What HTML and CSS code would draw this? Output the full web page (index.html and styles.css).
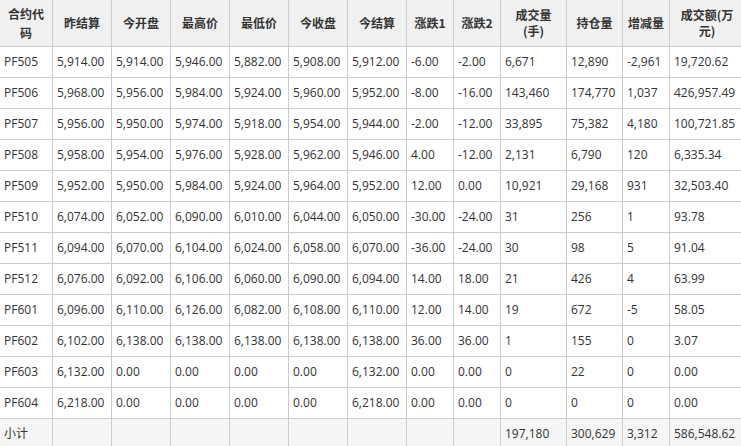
FILE: index.html
```html
<!DOCTYPE html>
<html lang="zh">
<head>
<meta charset="utf-8">
<link rel="stylesheet" href="styles.css">
</head>
<body>
<table class="quote">
<colgroup>
<col class="c-code"><col class="c-px"><col class="c-px"><col class="c-px"><col class="c-px"><col class="c-px"><col class="c-px"><col class="c-chg"><col class="c-chg"><col class="c-vol"><col class="c-oi"><col class="c-chg"><col class="c-amt">
</colgroup>
<thead>
<tr>
<th class="wrap-tall">合约代<br>码</th><th>昨结算</th><th>今开盘</th><th>最高价</th><th>最低价</th><th>今收盘</th><th>今结算</th><th>涨跌1</th><th>涨跌2</th><th class="wrap">成交量<br>(手)</th><th>持仓量</th><th>增减量</th><th class="wrap">成交额(万<br>元)</th>
</tr>
</thead>
<tbody>
<tr><td>PF505</td><td>5,914.00</td><td>5,914.00</td><td>5,946.00</td><td>5,882.00</td><td>5,908.00</td><td>5,912.00</td><td>-6.00</td><td>-2.00</td><td>6,671</td><td>12,890</td><td>-2,961</td><td>19,720.62</td></tr>
<tr><td>PF506</td><td>5,968.00</td><td>5,956.00</td><td>5,984.00</td><td>5,924.00</td><td>5,960.00</td><td>5,952.00</td><td>-8.00</td><td>-16.00</td><td>143,460</td><td>174,770</td><td>1,037</td><td>426,957.49</td></tr>
<tr><td>PF507</td><td>5,956.00</td><td>5,950.00</td><td>5,974.00</td><td>5,918.00</td><td>5,954.00</td><td>5,944.00</td><td>-2.00</td><td>-12.00</td><td>33,895</td><td>75,382</td><td>4,180</td><td>100,721.85</td></tr>
<tr><td>PF508</td><td>5,958.00</td><td>5,954.00</td><td>5,976.00</td><td>5,928.00</td><td>5,962.00</td><td>5,946.00</td><td>4.00</td><td>-12.00</td><td>2,131</td><td>6,790</td><td>120</td><td>6,335.34</td></tr>
<tr><td>PF509</td><td>5,952.00</td><td>5,950.00</td><td>5,984.00</td><td>5,924.00</td><td>5,964.00</td><td>5,952.00</td><td>12.00</td><td>0.00</td><td>10,921</td><td>29,168</td><td>931</td><td>32,503.40</td></tr>
<tr><td>PF510</td><td>6,074.00</td><td>6,052.00</td><td>6,090.00</td><td>6,010.00</td><td>6,044.00</td><td>6,050.00</td><td>-30.00</td><td>-24.00</td><td>31</td><td>256</td><td>1</td><td>93.78</td></tr>
<tr><td>PF511</td><td>6,094.00</td><td>6,070.00</td><td>6,104.00</td><td>6,024.00</td><td>6,058.00</td><td>6,070.00</td><td>-36.00</td><td>-24.00</td><td>30</td><td>98</td><td>5</td><td>91.04</td></tr>
<tr><td>PF512</td><td>6,076.00</td><td>6,092.00</td><td>6,106.00</td><td>6,060.00</td><td>6,090.00</td><td>6,094.00</td><td>14.00</td><td>18.00</td><td>21</td><td>426</td><td>4</td><td>63.99</td></tr>
<tr><td>PF601</td><td>6,096.00</td><td>6,110.00</td><td>6,126.00</td><td>6,082.00</td><td>6,108.00</td><td>6,110.00</td><td>12.00</td><td>14.00</td><td>19</td><td>672</td><td>-5</td><td>58.05</td></tr>
<tr><td>PF602</td><td>6,102.00</td><td>6,138.00</td><td>6,138.00</td><td>6,138.00</td><td>6,138.00</td><td>6,138.00</td><td>36.00</td><td>36.00</td><td>1</td><td>155</td><td>0</td><td>3.07</td></tr>
<tr><td>PF603</td><td>6,132.00</td><td>0.00</td><td>0.00</td><td>0.00</td><td>0.00</td><td>6,132.00</td><td>0.00</td><td>0.00</td><td>0</td><td>22</td><td>0</td><td>0.00</td></tr>
<tr><td>PF604</td><td>6,218.00</td><td>0.00</td><td>0.00</td><td>0.00</td><td>0.00</td><td>6,218.00</td><td>0.00</td><td>0.00</td><td>0</td><td>0</td><td>0</td><td>0.00</td></tr>
<tr class="total"><td>小计</td><td></td><td></td><td></td><td></td><td></td><td></td><td></td><td></td><td>197,180</td><td>300,629</td><td>3,312</td><td>586,548.62</td></tr>
</tbody>
</table>
</body>
</html>
```
FILE: styles.css
```css
html, body {
  margin: 0;
  padding: 0;
  background: #ffffff;
}
body {
  font-family: "Open Sans", "Noto Sans CJK SC", sans-serif;
  font-size: 12px;
  color: #333333;
  overflow: hidden;
}
.quote {
  border-collapse: collapse;
  table-layout: fixed;
  width: 744px;
  margin: -1px 0 0 -1px;
}
.c-code { width: 53px; }
.c-px { width: 59px; }
.c-chg { width: 47px; }
.c-vol { width: 66px; }
.c-oi { width: 56px; }
.c-amt { width: 75px; }
.quote th, .quote td {
  border: 1px solid #cccccc;
  padding: 0 4px;
  overflow: hidden;
  white-space: nowrap;
}
.quote th {
  background: #f0f0f0;
  height: 46px;
  font-family: "Noto Sans CJK SC", sans-serif;
  font-weight: bold;
  text-align: center;
  line-height: 16px;
  padding: 0 2px;
}
.quote th.wrap-tall {
  line-height: 19px;
}
.quote td {
  height: 30px;
  text-align: left;
  line-height: 16px;
}
.quote .total td {
  background: #f5f5f5;
  height: 30px;
}
```
